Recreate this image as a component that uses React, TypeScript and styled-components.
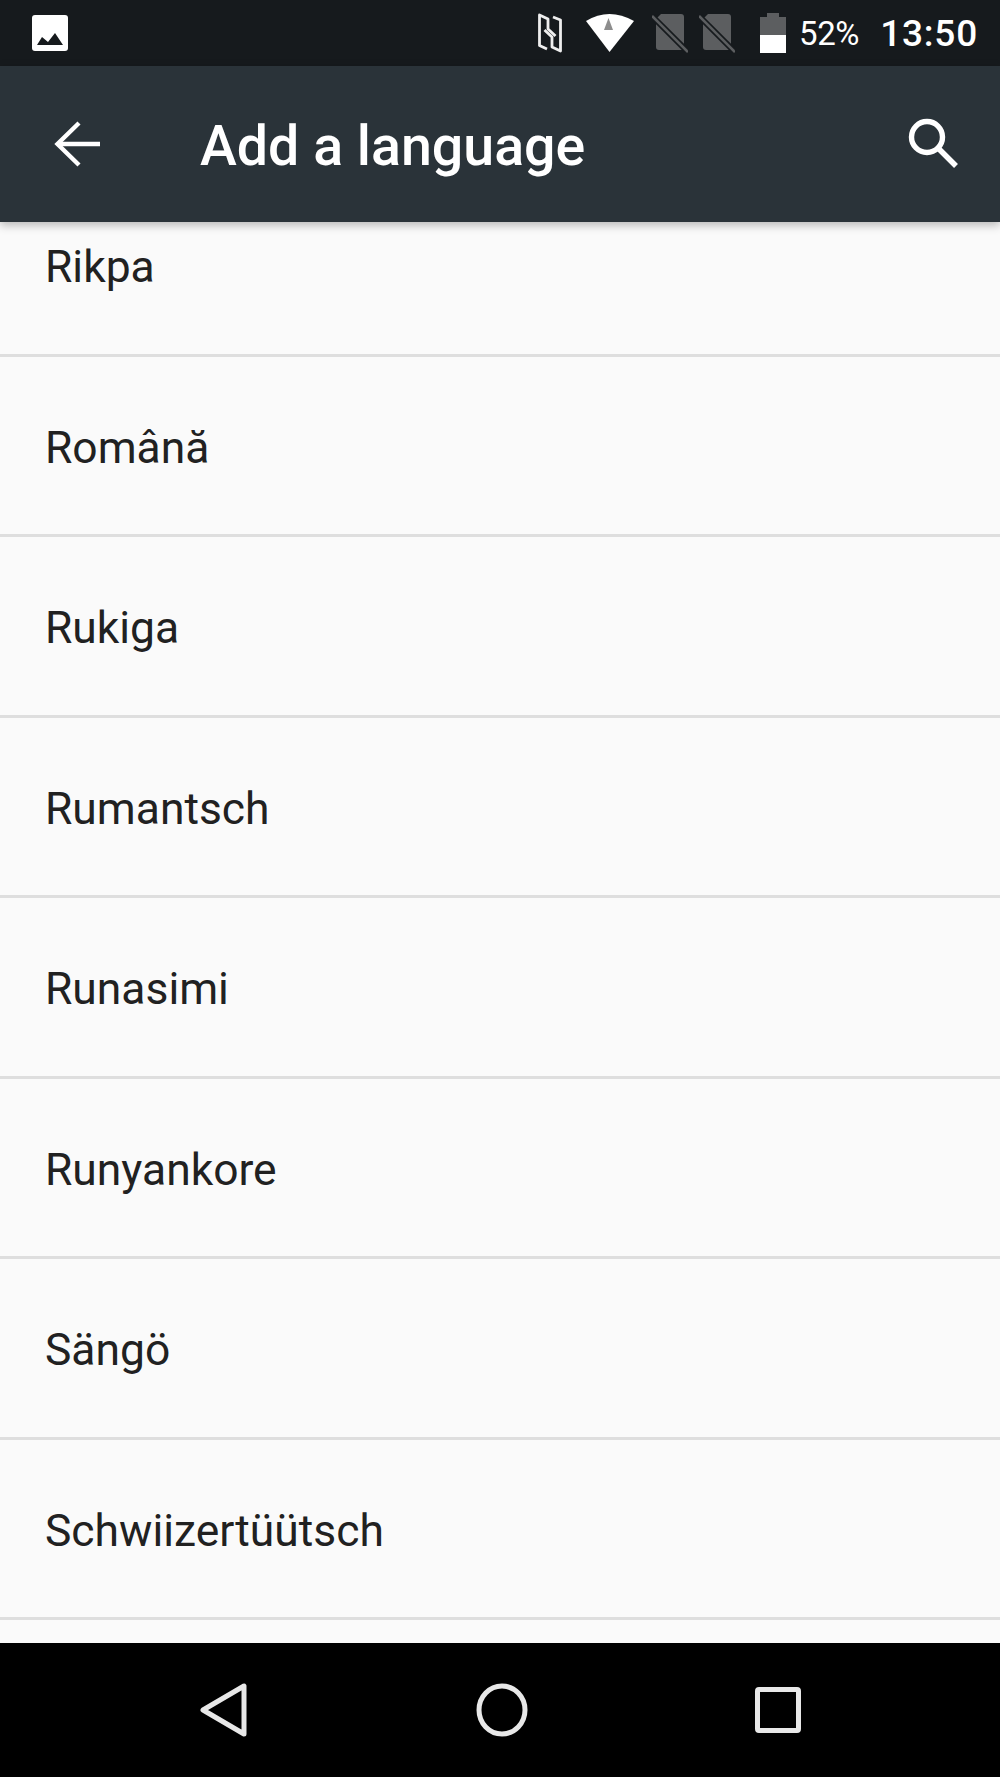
import React from "react";
import styled, { createGlobalStyle } from "styled-components";

const Global = createGlobalStyle`
  html, body { margin: 0; padding: 0; background: #fafafa; }
  #root { width: 1000px; height: 1777px; }
`;

const Screen = styled.div`
  width: 1000px;
  height: 1777px;
  display: flex;
  flex-direction: column;
  font-family: Roboto, "Liberation Sans", sans-serif;
  background: #fafafa;
  overflow: hidden;
`;

const StatusBar = styled.div`
  height: 66px;
  flex: none;
  background: #161a1d;
  display: flex;
  align-items: center;
  justify-content: space-between;
  padding: 0 22px 0 32px;
  color: #fff;
`;

const StatusIcons = styled.div`
  display: flex;
  align-items: center;
`;

const Slot = styled.div<{ $ml: number }>`
  margin-left: ${(p) => p.$ml}px;
  display: flex;
  align-items: center;
`;

const Percent = styled.span`
  font-size: 33px;
  font-weight: 400;
  margin-left: 13px;
  letter-spacing: -0.4px;
`;

const Clock = styled.span`
  font-size: 37px;
  font-weight: 500;
  margin-left: 21px;
  letter-spacing: 0.8px;
`;

const Toolbar = styled.header`
  height: 156px;
  flex: none;
  background: #2a3339;
  display: flex;
  align-items: center;
  padding: 0 41px 0 54px;
  color: #fff;
  position: relative;
  z-index: 2;
  box-shadow: 0 3px 9px rgba(0, 0, 0, 0.28);
`;

const Title = styled.h1`
  margin: 5px 0 0 100px;
  flex: 1;
  font-size: 55.5px;
  font-weight: 500;
  line-height: 1;
`;

const ListViewport = styled.main`
  flex: 1;
  overflow: hidden;
`;

const List = styled.ul`
  list-style: none;
  margin: -46px 0 0;
  padding: 0;
`;

const Row = styled.li`
  height: 180.5px;
  box-sizing: border-box;
  display: flex;
  align-items: center;
  padding-left: 45px;
  padding-top: 5px;
  font-size: 44.4px;
  color: #212121;
  border-bottom: 3px solid #dedede;
`;

const NavBar = styled.nav`
  height: 134px;
  flex: none;
  background: #000;
  display: flex;
  align-items: center;
  justify-content: space-between;
  padding: 0 199px 0 200px;
`;

const languages = [
  "Rikpa",
  "Română",
  "Rukiga",
  "Rumantsch",
  "Runasimi",
  "Runyankore",
  "Sängö",
  "Schwiizertüütsch",
];

const SimIcon = () => (
  <svg width="36" height="40" viewBox="0 0 36 40">
    <path d="M9 1 H29 Q32 1 32 4 V34 Q32 37 29 37 H7 Q4 37 4 34 V6 Z" fill="#5c5e60" />
    <path d="M0 3 L36 39" stroke="#161a1d" strokeWidth="6" />
    <path d="M0 3 L36 39" stroke="#5c5e60" strokeWidth="2.6" />
  </svg>
);

export default function App() {
  return (
    <Screen>
      <Global />
      <StatusBar>
        <svg width="36" height="36" viewBox="0 0 36 36">
          <rect width="36" height="36" rx="3" fill="#fff" />
          <path d="M5 30 L10 22 L16 27 L23 18 L31 30 Z" fill="#161a1d" />
        </svg>
        <StatusIcons>
          <svg width="24" height="40" viewBox="0 0 24 40" fill="none" stroke="#eee" strokeWidth="2.8" strokeLinejoin="round">
            <path d="M9 36 L1.5 32.5 V2 L10 6 V16 L17.5 23" />
            <path d="M15 4 L22.5 7 V38 L14 34 V24 L6.5 17" />
          </svg>
          <Slot $ml={23}>
            <svg width="50" height="40" viewBox="0 0 50 40">
              <path d="M1 8 Q24 -6 49 8 L24.5 39 Z" fill="#fff" />
              <path d="M19 17 L23.5 5 L28 17 Z" fill="#8d8d8d" />
            </svg>
          </Slot>
          <Slot $ml={17}>
            <SimIcon />
          </Slot>
          <Slot $ml={11}>
            <SimIcon />
          </Slot>
          <Slot $ml={25}>
            <svg width="26" height="40" viewBox="0 0 26 40">
              <path d="M7 0 H19 V4 H26 V22 H0 V4 H7 Z" fill="#5c5e60" />
              <rect y="22" width="26" height="18" fill="#fff" />
            </svg>
          </Slot>
          <Percent>52%</Percent>
          <Clock>13:50</Clock>
        </StatusIcons>
      </StatusBar>

      <Toolbar>
        <svg width="46" height="46" viewBox="0 0 46 46" fill="none" stroke="#fff" strokeWidth="4.4">
          <path d="M46 23 H4" />
          <path d="M25 2 L3.5 23 L25 44" />
        </svg>
        <Title>Add a language</Title>
        <svg width="52" height="52" viewBox="0 0 52 52" fill="none" stroke="#fff" strokeWidth="5.4">
          <circle cx="20" cy="19" r="15.5" />
          <path d="M31 30 L49 48" />
        </svg>
      </Toolbar>

      <ListViewport>
        <List>
          {languages.map((l) => (
            <Row key={l}>{l}</Row>
          ))}
        </List>
      </ListViewport>

      <NavBar>
        <svg width="48" height="54" viewBox="0 0 48 54" fill="none" stroke="#e8e8e8" strokeWidth="5" strokeLinejoin="round">
          <path d="M44 3 V51 L3 27 Z" />
        </svg>
        <svg width="52" height="54" viewBox="0 0 52 54" fill="none" stroke="#e8e8e8" strokeWidth="5">
          <ellipse cx="26" cy="27" rx="23" ry="24" />
        </svg>
        <svg width="46" height="46" viewBox="0 0 46 46" fill="none" stroke="#e8e8e8" strokeWidth="5" strokeLinejoin="round">
          <rect x="2.5" y="2.5" width="41" height="41" rx="1.5" />
        </svg>
      </NavBar>
    </Screen>
  );
}
